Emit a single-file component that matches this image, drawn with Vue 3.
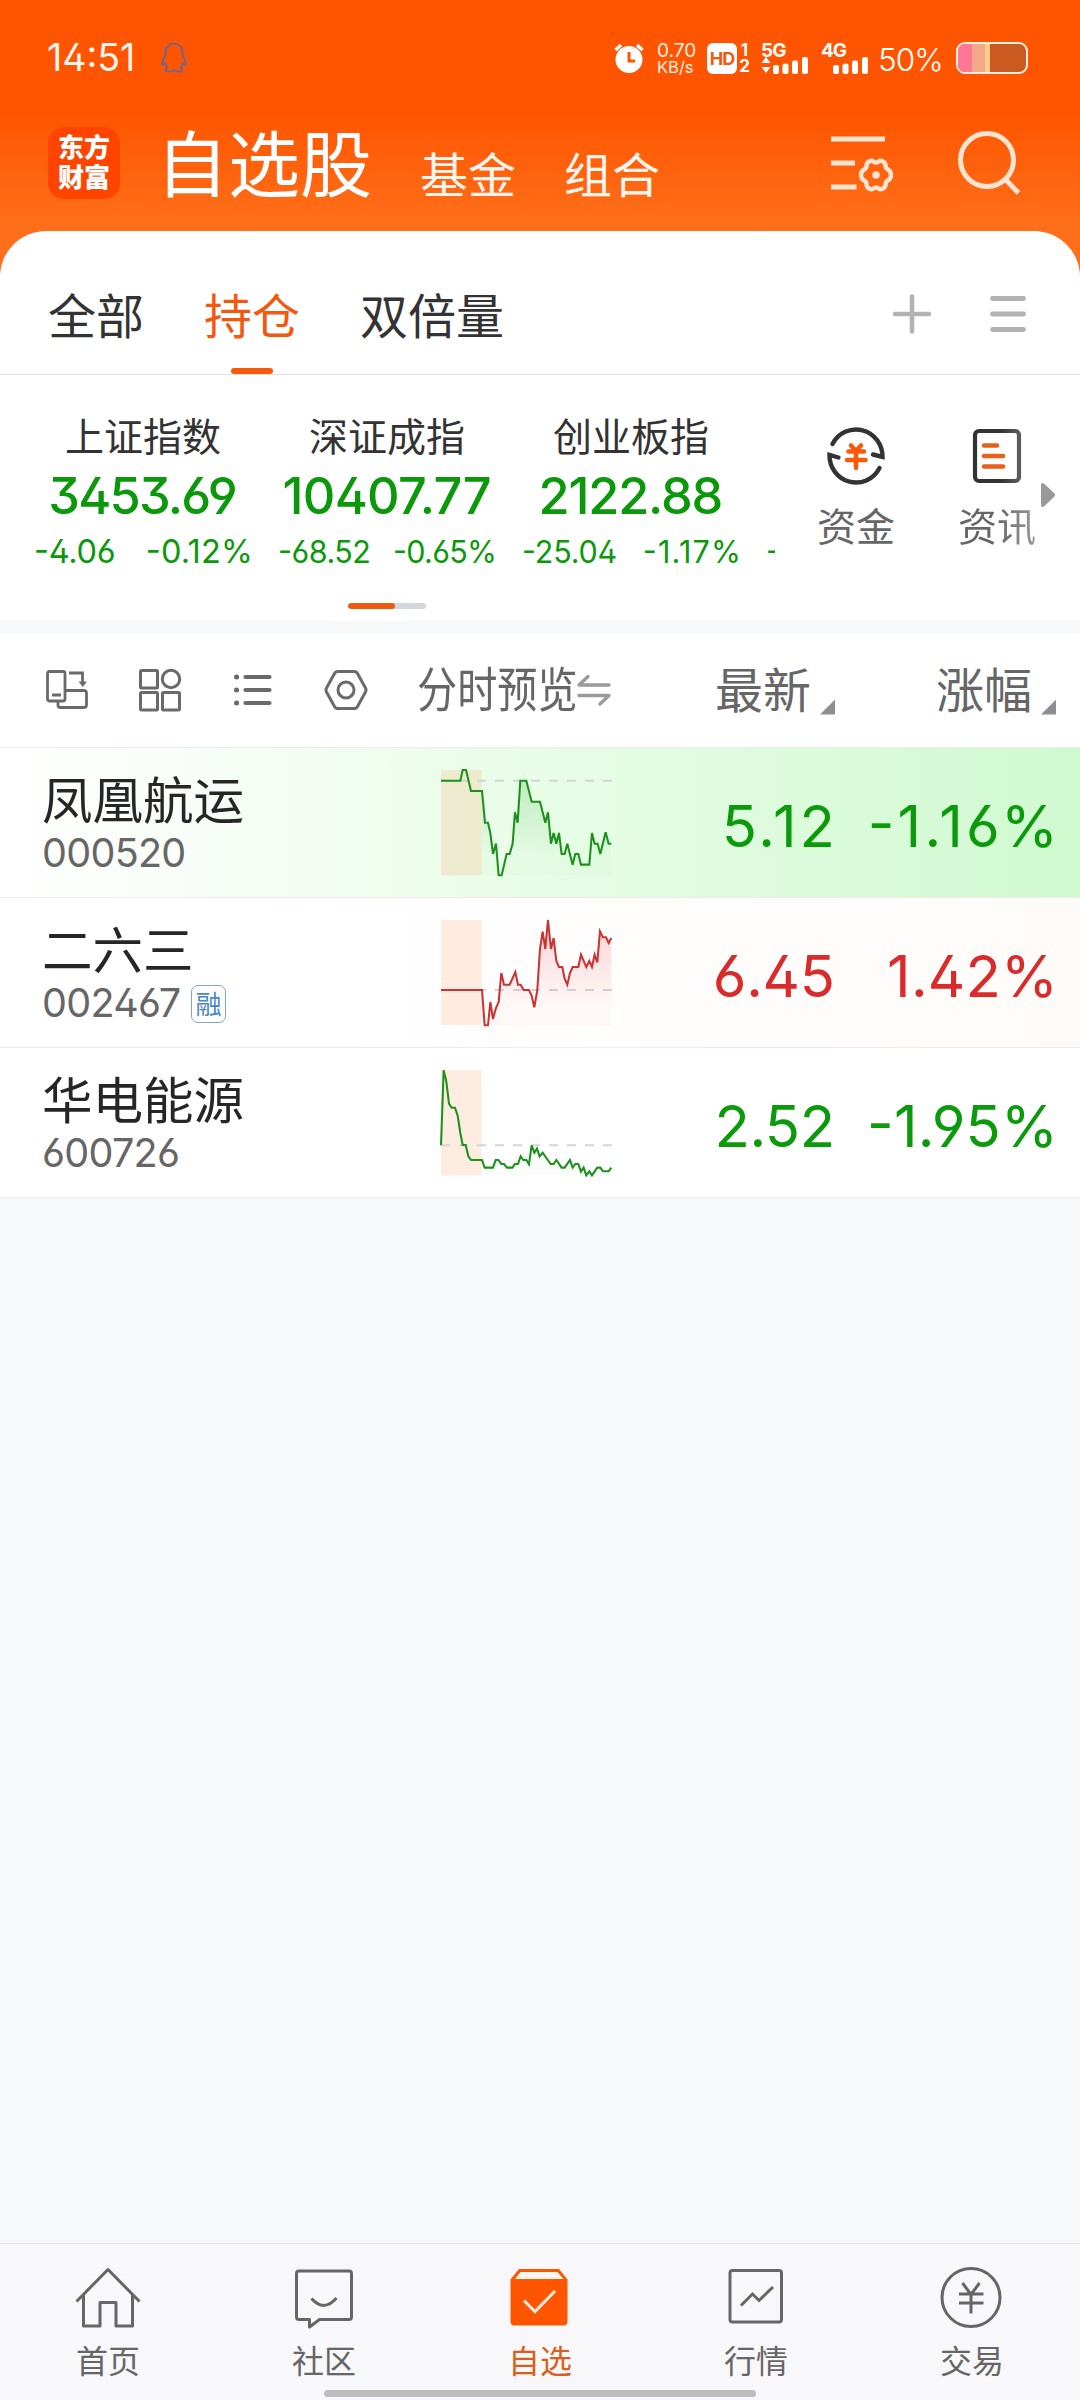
<script setup>
// The last item of each figure is its letter spacing in px
const indices = [
  { name: '上证指数', size: 'lg', value: ['3453.69', -1.8], diff: ['-4.06', -0.3], pct: ['-0.12%', 0.2] },
  { name: '深证成指', size: 'sm', value: ['10407.77', -0.7], diff: ['-68.52', -0.5], pct: ['-0.65%', -0.7] },
  { name: '创业板指', size: 'sm', value: ['2122.88', -1.2], diff: ['-25.04', -0.2], pct: ['-1.17%', 1.2] },
]

const stocks = [
  {
    name: '凤凰航运', code: '000520', price: ['5.12', 3], pct: ['-1.16%', 3.2], dir: 'down', glow: 'glow-green', base: 123,
    line: '63,123 121,123 128,91 138,91 153,154 186,154 195,249 204,249 211,280 219,343 228,312 236,407 245,407 260,343 269,343 278,312 285,218 293,249 301,123 319,123 335,186 360,186 376,249 384,218 393,312 401,280 409,312 417,280 425,343 434,343 442,312 458,375 466,343 475,343 483,375 508,375 516,280 524,312 533,312 541,343 557,278 566,312 574,312',
  },
  {
    name: '二六三', code: '002467', tag: '融', price: ['6.45', -0.3], pct: ['1.42%', 0.2], dir: 'up', glow: 'glow-red', base: 301,
    line: '63,301 186,301 194,407 204,407 211,337 219,388 228,355 236,337 244,250 252,285 269,285 286,247 294,285 302,285 311,301 327,301 335,318 343,353 352,301 360,178 368,126 376,178 384,91 393,178 401,145 409,214 417,232 427,232 434,267 442,285 450,250 458,232 475,232 483,195 499,232 508,214 516,232 524,195 532,218 540,125 549,143 558,143 566,160 574,145',
  },
  {
    name: '华电能源', code: '600726', price: ['2.52', -0.5], pct: ['-1.95%', 0.2], dir: 'down', glow: '', base: 317,
    line: '63,317 71,92 79,125 87,192 95,204 105,204 113,228 121,280 128,316 137,316 145,350 153,361 186,361 194,384 219,384 227,361 235,361 244,373 252,373 261,384 277,384 285,373 294,373 302,350 310,361 319,361 327,374 335,317 343,339 351,327 359,350 368,339 392,373 401,373 409,361 425,384 434,384 450,361 458,384 466,373 475,373 483,396 491,384 499,407 508,395 516,407 532,384 541,384 549,395 566,395 574,384',
  },
]

// Letter spacing, with the trailing gap taken back so that edges stay aligned
const track = ([, px]) => ({ letterSpacing: `${px}px`, marginRight: `${-px}px` })

// Area under the curve, starting where the pre-market band ends
const area = (line) => {
  const pts = line.split(' ').filter((p) => Number(p.split(',')[0]) >= 186)
  return `186,407 ${pts.join(' ')} 574,407`
}
</script>

<template>
  <div class="app">
    <header class="top">
      <div class="status">
        <span class="clock num">14:51</span>
        <svg class="penguin" width="26" height="32" viewBox="0 0 26 32" fill="none" stroke="#5a68a4" stroke-width="1.7" stroke-linejoin="round">
          <path d="M13 1.5C7.500 1.500 4.500 5.500 4.500 10.500V12.500C4.500 14.500 1.500 17.500 1.200 21.500C1.100 23.500 2 23.500 4.200 21C4.600 23 5.400 24.500 6.400 25.500C4.600 26.300 4 29.500 5.500 29.500H11C12 29.500 12.500 28.300 13 28.300S14 29.500 15 29.500H20.500C22 29.500 21.400 26.300 19.600 25.500C20.600 24.500 21.400 23 21.800 21C24 23.500 24.900 23.500 24.800 21.500C24.500 17.500 21.500 14.500 21.500 12.500V10.500C21.500 5.500 18.500 1.500 13 1.500Z" />
        </svg>
        <div class="status-right">
          <svg class="alarm" width="30" height="30" viewBox="0 0 30 30">
            <circle cx="15" cy="16.500" r="13.500" fill="#fff" />
            <path d="M1.500 7L7 2M28.500 7L23 2" stroke="#fff" stroke-width="3.400" />
            <path d="M15 9V18H21" fill="none" stroke="#ff5500" stroke-width="3" />
          </svg>
          <div class="speed num"><span>0.70</span><span>KB/s</span></div>
          <div class="hd num">HD</div>
          <div class="sims num"><span>1</span><span>2</span></div>
          <div class="cell num">
            <span>5G</span>
            <svg width="48" height="17" viewBox="0 0 48 17" fill="#fff">
              <path d="M5 0L9.500 6H.5ZM5 16L.5 10H9.500Z" />
              <rect x="12" y="8" width="6" height="9" rx="2" /><rect x="21.500" y="6.500" width="6" height="10.500" rx="2" /><rect x="31" y="3.500" width="6" height="13.500" rx="2" /><rect x="41" y="0" width="6" height="17" rx="2" />
            </svg>
          </div>
          <div class="cell second num">
            <span>4G</span>
            <svg width="48" height="17" viewBox="0 0 48 17" fill="#fff">
              <rect x="12" y="8" width="6" height="9" rx="2" /><rect x="21.500" y="6.500" width="6" height="10.500" rx="2" /><rect x="31" y="3.500" width="6" height="13.500" rx="2" /><rect x="41" y="0" width="6" height="17" rx="2" />
            </svg>
          </div>
          <span class="power num">50%</span>
          <div class="battery"><i class="b1"></i><i class="b2"></i><i class="b3"></i></div>
        </div>
      </div>
      <div class="titlebar">
        <div class="logo"><span>东方</span><span>财富</span></div>
        <h1>自选股</h1>
        <span class="sub">基金</span>
        <span class="sub">组合</span>
        <svg class="filter" width="64" height="62" viewBox="0 0 64 62" fill="none" stroke="#ffe4d2" stroke-width="5">
          <path d="M0 6H54M0 30H24M0 54H25.500" />
          <path stroke-linejoin="round" stroke-width="4.500" d="M38 28.500Q40.500 27 42.500 28.500Q45 30.500 47.500 28.500Q49.500 27 52 28.500Q54.500 30 54.500 32.500Q54.500 35.500 57.500 37Q60 38.500 60 42Q60 45.500 57.500 47Q54.500 48.500 54.500 51.500Q54.500 54 52 55.500Q49.500 57 47.500 55.500Q45 53.500 42.500 55.500Q40.500 57 38 55.500Q35.500 54 35.500 51.500Q35.500 48.500 32.500 47Q30 45.500 30 42Q30 38.500 32.500 37Q35.500 35.500 35.500 32.500Q35.500 30 38 28.500Z" />
          <circle cx="45" cy="42" r="3.800" fill="#ffe4d2" stroke="none" />
        </svg>
        <svg class="search" width="64" height="66" viewBox="0 0 64 66" fill="none" stroke="#ffe4d2" stroke-width="5">
          <circle cx="30" cy="30" r="26.500" /><path d="M48 49L61.500 63" />
        </svg>
      </div>
    </header>

    <main class="panel">
      <nav class="tabs">
        <span>全部</span>
        <span class="active">持仓</span>
        <span>双倍量</span>
        <svg class="plus" width="40" height="40" viewBox="0 0 40 40" stroke="#b2b2b2" stroke-width="4.500" stroke-linecap="round"><path d="M20 2.500V37.500M3 20H37" /></svg>
        <svg class="menu" width="38" height="40" viewBox="0 0 38 40" stroke="#b2b2b2" stroke-width="4.800" stroke-linecap="round"><path d="M3.500 4.500H34.500M3.500 20H34.500M3.500 35.500H34.500" /></svg>
      </nav>

      <section class="market">
        <div class="indices">
          <div v-for="i in indices" :key="i.name" class="index" :class="i.size">
            <div class="iname">{{ i.name }}</div>
            <div class="ivalue num" :style="track(i.value)">{{ i.value[0] }}</div>
            <div class="ichange num"><span :style="track(i.diff)">{{ i.diff[0] }}</span><span :style="track(i.pct)">{{ i.pct[0] }}</span></div>
          </div>
          <div class="index sm peek"><div class="ichange num"><span>-</span></div></div>
        </div>
        <div class="tool">
          <svg width="60" height="62" viewBox="0 0 60 62" fill="none" stroke="#333" stroke-width="4.400" stroke-linecap="round" stroke-linejoin="miter">
            <path d="M6.500 19A26.500 27 0 0 1 56.500 32L47 29.500" />
            <path d="M53.500 43A26.500 27 0 0 1 3.500 30L12.500 32.500" />
            <g stroke="#f95a0a" stroke-width="4.500"><path d="M25 20.500L30 26L35 20.500M22.500 26.500H38M21 35H39.500M30 26V43" /></g>
          </svg>
          <span>资金</span>
        </div>
        <div class="tool news">
          <svg width="60" height="62" viewBox="0 0 60 62" fill="none" stroke-linecap="round">
            <defs><linearGradient id="edge"><stop offset=".6" stop-color="#333" /><stop offset="1" stop-color="#5c5c5c" /></linearGradient></defs>
            <rect x="8" y="6" width="44" height="50" rx="4" stroke="url(#edge)" stroke-width="4.200" />
            <path d="M17 20.500H30M17 31H36M17 41.500H36" stroke="#e9601a" stroke-width="4.600" />
          </svg>
          <span>资讯</span>
        </div>
        <svg class="more" width="16" height="26" viewBox="0 0 16 26"><path d="M1 3Q1 0 4 1.500L14 11Q16 13 14 15L4 24.500Q1 26 1 23Z" fill="#999" /></svg>
      </section>
      <div class="pager"><i></i></div>
    </main>

    <section class="list">
      <div class="cols">
        <svg width="44" height="44" viewBox="0 0 44 44" fill="none" stroke="#6a6a6a" stroke-width="2.800">
          <rect x="2.500" y="3.500" width="17.500" height="29.500" rx="2" /><path d="M7 27H16" stroke-width="3" />
          <path d="M20 22.500H38.500Q41.500 22.500 41.500 25V37Q41.500 39.500 38.500 39.500H15.500Q13 39.500 13 37V33" />
          <path d="M24 5H37.500V14" /><path d="M33.500 13.500H42L37.800 19Z" fill="#6a6a6a" stroke="none" />
        </svg>
        <svg width="44" height="44" viewBox="0 0 44 44" fill="none" stroke="#6a6a6a" stroke-width="3">
          <rect x="2.500" y="2.500" width="17" height="17.500" rx="1" /><circle cx="33" cy="11" r="8.700" />
          <rect x="2.500" y="24.500" width="17" height="17.500" rx="1" /><rect x="24.500" y="24.500" width="17" height="17.500" rx="1" />
        </svg>
        <svg width="44" height="44" viewBox="0 0 44 44" stroke="#6a6a6a" stroke-width="4.200" stroke-linecap="round">
          <path d="M14.500 9H38.500M14.500 22H38.500M14.500 35H38.500" /><path d="M5.500 9H5.600M5.500 22H5.600M5.500 35H5.600" stroke-width="5" />
        </svg>
        <svg width="44" height="44" viewBox="0 0 44 44" fill="none" stroke="#6a6a6a" stroke-width="3" stroke-linejoin="round">
          <path d="M14 3.500H30Q32.500 3.500 33.500 5.500L41.500 20Q42.500 22 41.500 24L33.500 38.500Q32.500 40.500 30 40.500H14Q11.500 40.500 10.500 38.500L2.500 24Q1.500 22 2.500 20L10.500 5.500Q11.500 3.500 14 3.500Z" /><circle cx="22" cy="22" r="8" />
        </svg>
        <span class="preview">分时预览</span>
        <svg class="swap" width="36" height="34" viewBox="0 0 36 34" fill="none" stroke="#9b9b9b" stroke-width="3.400" stroke-linecap="round" stroke-linejoin="round"><path d="M33 12H3L12 3.500M3 22.500H33L24 31" /></svg>
        <span class="sort latest">最新<i></i></span>
        <span class="sort change">涨幅<i></i></span>
      </div>

      <article v-for="s in stocks" :key="s.code" class="row" :class="[s.dir, s.glow]">
        <div class="who">
          <div class="sname">{{ s.name }}</div>
          <div class="code"><span class="num">{{ s.code }}</span><em v-if="s.tag">{{ s.tag }}</em></div>
        </div>
        <svg class="chart" width="173.300" height="110" viewBox="60 85 520 330" fill="none">
          <defs>
            <linearGradient id="fill-down" gradientUnits="userSpaceOnUse" x1="0" y1="91" x2="0" y2="407"><stop offset="0" stop-color="#0a960a" stop-opacity=".2" /><stop offset=".8" stop-color="#0a960a" stop-opacity=".02" /><stop offset="1" stop-color="#0a960a" stop-opacity=".02" /></linearGradient>
            <linearGradient id="fill-up" gradientUnits="userSpaceOnUse" x1="0" y1="91" x2="0" y2="407"><stop offset="0" stop-color="#e03030" stop-opacity=".2" /><stop offset=".8" stop-color="#e03030" stop-opacity=".03" /><stop offset="1" stop-color="#e03030" stop-opacity=".03" /></linearGradient>
          </defs>
          <rect x="63" y="91" width="122" height="316" fill="#ff6a1a" fill-opacity=".13" />
          <path :d="`M63 ${s.base}H577`" stroke="#d4d4da" stroke-width="6" stroke-dasharray="27 27" />
          <polygon :points="area(s.line)" :fill="`url(#fill-${s.dir})`" />
          <polyline :points="s.line" class="trace" stroke-width="6.200" />
        </svg>
        <div class="price num" :style="track(s.price)">{{ s.price[0] }}</div>
        <div class="pct num" :style="track(s.pct)">{{ s.pct[0] }}</div>
      </article>
    </section>

    <footer class="nav">
      <div class="item">
        <svg width="70" height="64" viewBox="0 0 70 64" fill="none" stroke="#666" stroke-width="3" stroke-linejoin="round"><path d="M3.500 36.500L35 4.500L66.500 36.500M10.500 30V61H27V37.500H43V61H59.500V30" /></svg>
        <span>首页</span>
      </div>
      <div class="item">
        <svg width="70" height="64" viewBox="0 0 70 64" fill="none" stroke="#666" stroke-width="3" stroke-linejoin="round"><path d="M10 6H60Q62.500 6 62.500 8.500V52Q62.500 54.500 60 54.500H30.500L20.500 62V54.500H10Q7.500 54.500 7.500 52V8.500Q7.500 6 10 6Z" /><path d="M22.500 33.500Q35 47.500 47.500 33" /></svg>
        <span>社区</span>
      </div>
      <div class="item on">
        <svg width="70" height="64" viewBox="0 0 70 64" fill="none"><path d="M14 4H54L62.500 14.500V56.500Q62.500 60.500 58.500 60.500H9.500Q5.500 60.500 5.500 56.500V14.500Z" fill="#ff5500" /><path d="M15.500 7H52.500L58.500 14H10Z" fill="#fff5ee" /><path d="M19 35.500L30 46.500L50 26" stroke="#ffeadd" stroke-width="3" /></svg>
        <span>自选</span>
      </div>
      <div class="item">
        <svg width="70" height="64" viewBox="0 0 70 64" fill="none" stroke="#666" stroke-width="3"><rect x="9" y="5.500" width="51.500" height="51.500" rx="2.500" /><path d="M20 40.500L31.500 29L38 35.500L52 22" /></svg>
        <span>行情</span>
      </div>
      <div class="item">
        <svg width="70" height="64" viewBox="0 0 70 64" fill="none" stroke="#666" stroke-width="3"><circle cx="34" cy="32.500" r="29" /><path d="M25.500 18L34 29.500L42.500 18M22 29H46.500M22 38H46.500M34 29V48.500" /></svg>
        <span>交易</span>
      </div>
      <div class="homebar"></div>
    </footer>
  </div>
</template>

<style>
body { margin: 0; }
</style>

<style scoped>
.app { width: 1080px; height: 2400px; display: flex; flex-direction: column; background: #f7f8fa; color: #333; font-family: "Noto Sans CJK SC", sans-serif; overflow: hidden; }
.app svg { flex: none; display: block; }
.num { font-family: Inter, "Noto Sans CJK SC", sans-serif; font-feature-settings: "ss01", "case"; white-space: nowrap; }

.top { height: 300px; margin-bottom: -69px; flex: none; background: linear-gradient(#ff5500 0, #ff5500 112px, #ff6f1a 225px, #ff7020 300px); color: #fff5ec; }
.status { height: 116px; display: flex; align-items: center; padding: 0 52px 0 47px; box-sizing: border-box; }
.clock { font-size: 37.500px; line-height: 116px; width: 114px; font-feature-settings: "ss01"; }
.status-right { margin-left: auto; display: flex; align-items: center; color: #fff; }
.alarm { margin-right: 13px; }
.speed { display: flex; flex-direction: column; width: 50px; line-height: 16px; color: #ffefe2; font-feature-settings: normal; }
.speed span:first-child { font-size: 19px; line-height: 17px; }
.speed span:last-child { font-size: 16.500px; }
.hd { width: 30px; height: 31px; border-radius: 6px; background: #fff; color: #f05a10; font-weight: 700; font-size: 18px; line-height: 31px; text-align: center; letter-spacing: -1px; }
.sims { display: flex; flex-direction: column; align-items: center; width: 15px; margin-right: 9px; font-size: 17px; font-weight: 700; line-height: 16px; font-feature-settings: normal; }
.cell { width: 60px; height: 31px; font-weight: 700; font-size: 19px; line-height: 15px; letter-spacing: -1px; font-feature-settings: normal; }
.cell svg { margin-top: -1px; }
.cell.second { width: 57px; }
.power { font-size: 31.500px; font-weight: 300; letter-spacing: -1px; width: 78px; margin-top: 2px; font-feature-settings: normal; }
.battery { width: 68px; height: 28px; border: 2px solid #fff0e2; border-radius: 9px; background: #cb5a20; overflow: hidden; display: flex; }
.battery i { height: 100%; }
.b1 { width: 14px; background: #ff7794; }
.b2 { width: 13px; background: #f3a88a; }
.b3 { width: 5px; background: #ffce8a; }
.titlebar { height: 115px; display: flex; align-items: flex-start; padding-left: 48px; }
.logo { width: 72px; height: 72px; margin-top: 11px; border-radius: 16px; background: #ff4400; display: flex; flex-direction: column; align-items: center; padding-top: 4px; box-sizing: border-box; font-weight: 900; font-size: 26px; line-height: 30px; color: #fff; }
h1 { margin: 4px 0 0 36px; width: 264px; font-size: 72px; font-weight: 400; line-height: 80px; color: #fff; }
.sub { margin-top: 24px; width: 144px; font-size: 48px; line-height: 64px; white-space: nowrap; }
.filter { margin-top: 17px; margin-left: 123px; }
.search { margin: 14px 0 0 62px; }

.panel { position: relative; height: 390px; flex: none; background: #fff; border-radius: 46px 46px 0 0; display: flex; flex-direction: column; }
.tabs { height: 143px; border-bottom: 1px solid #e3e4e6; display: flex; align-items: center; padding-left: 48px; font-size: 48px; line-height: 143px; }
.tabs span { margin-right: 60px; margin-top: 22px; position: relative; }
.tabs .active { color: #f3590e; }
.tabs .active::after { content: ""; position: absolute; left: 27px; bottom: 11px; width: 42px; height: 6px; border-radius: 3px; background: #f9590b; }
.plus { margin: 23px 0 0 auto; }
.menu { margin: 23px 53px 0 57px; }
.market { height: 228px; display: flex; position: relative; }
.indices { width: 775px; box-sizing: border-box; padding-left: 21px; display: flex; overflow: hidden; }
.index { width: 244px; flex: none; color: #0b990b; }
.iname { margin-top: 29px; font-size: 39px; line-height: 60px; text-align: center; color: #333; }
.ivalue { font-size: 50.500px; font-weight: 500; line-height: 60px; margin-top: 2px; text-align: center; }
.ichange { display: flex; justify-content: space-between; line-height: 40px; margin-top: 6px; padding: 0 12px 0 13px; }
.lg .ichange { font-size: 32.500px; }
.sm .ichange { font-size: 30.500px; }
.peek { padding-top: 151px; }
.tool { width: 141px; padding-top: 50px; display: flex; flex-direction: column; align-items: center; font-size: 39px; line-height: 56px; color: #666; margin-left: 10px; }
.tool span { margin-top: 9px; padding-left: 1px; }
.tool.news { margin-left: 0; }
.news span { background: linear-gradient(90deg, #666 50%, #9a9a9a 100%); background-clip: text; color: transparent; }
.more { position: absolute; right: 24px; top: 107px; }
.pager { width: 78px; height: 6px; margin-left: 348px; border-radius: 3px; background: #d3d7dc; overflow: hidden; }
.pager i { display: block; width: 47px; height: 6px; border-radius: 3px; background: #ee5a12; }

.list { margin-top: 12px; background: #fff; }
.cols { height: 114px; border-bottom: 1px solid #ececec; display: flex; align-items: center; padding-left: 45px; gap: 49px; color: #666; box-sizing: content-box; }
.preview { font-size: 47.500px; line-height: 114px; width: 158px; white-space: nowrap; transform: scaleX(.845); transform-origin: 0 50%; margin-top: -6px; }
.swap { margin-left: -48px; }
.sort { font-size: 48px; line-height: 114px; margin-top: -6px; display: flex; align-items: center; }
.latest { margin-left: 54px; }
.change { margin-left: 52px; }
.sort i { width: 15px; height: 15px; margin: 40px 0 0 9px; background: #8e8e93; clip-path: polygon(100% 0, 100% 100%, 0 100%); }
.row { height: 149px; border-bottom: 1px solid #ebebeb; display: grid; grid-template-columns: 398px 173px 222px 223px; padding-left: 42px; align-items: center; background: #fff; }
.glow-green { background: linear-gradient(90deg, #fff 0, #f3fdf2 30%, #e6fde5 52%, #d0f9d0 100%); }
.glow-red { background: linear-gradient(90deg, #fff 30%, #fffbf9 100%); }
.who { align-self: start; }
.sname { font-size: 50.500px; line-height: 60px; margin-top: 19px; color: #262626; }
.code { display: flex; align-items: center; font-size: 39.500px; line-height: 44px; margin-top: 4px; color: #666; letter-spacing: -0.700px; height: 44px; }
.code .num { width: 140px; }
.code em { font-style: normal; box-sizing: border-box; width: 35px; height: 38px; border: 1.500px solid #7ba6d8; border-radius: 7px; margin-left: 9px; margin-top: 1px; color: #4a86cc; font-size: 26px; line-height: 33px; text-align: center; letter-spacing: 0; }
.price, .pct { font-size: 58px; line-height: 70px; text-align: right; margin-top: 7px; }
.down { color: #0b9a0b; }
.up { color: #d92b2b; }
.down .trace { stroke: #1c911c; }
.up .trace { stroke: #cb3434; }

.nav { position: relative; margin-top: auto; height: 156px; border-top: 1px solid #e3e4e6; background: #f8f8fb; display: flex; }
.item { width: 216px; display: flex; flex-direction: column; align-items: center; padding-top: 21px; font-size: 32px; line-height: 46px; color: #666; }
.item span { margin-top: 7px; }
.item.on { color: #d9601c; }
.homebar { position: absolute; left: 324px; bottom: 3px; width: 432px; height: 7px; border-radius: 4px; background: #bdbdbd; }
</style>
